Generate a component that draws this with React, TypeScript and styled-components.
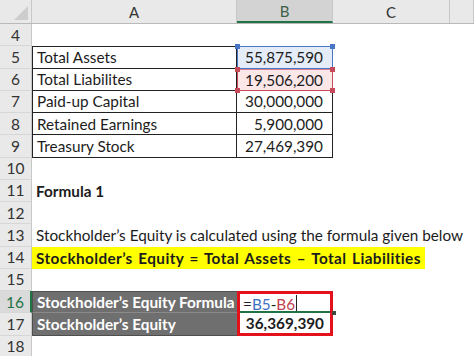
import React from 'react';
import styled, { createGlobalStyle, css } from 'styled-components';

const GlobalStyle = createGlobalStyle`
  html, body {
    margin: 0;
    padding: 0;
    background: #ffffff;
  }
  body {
    font-family: Lato, "Open Sans", "Liberation Sans", sans-serif;
    color: #1c1c1c;
  }
  * { box-sizing: border-box; }
`;

const COLS = '32px 205px 96px 117px 1fr';
const ROW_H = '22.25px';

const Sheet = styled.div({
    width: '474px',
    height: '356px',
    overflow: 'hidden',
    background: '#fff',
})

const HeaderRow = styled.div({
    display: 'grid',
    gridTemplateColumns: COLS,
    height: '24px',
    background: '#e9e9e9',
    borderBottom: '1px solid #b9b9b9',
})

const Corner = styled.div({
    position: 'relative',
    borderRight: '1px solid #c8c8c8',
    '&::after': {
        content: '""',
        position: 'absolute',
        right: '3px',
        bottom: '3px',
        width: 0,
        height: 0,
        borderLeft: '14px solid transparent',
        borderBottom: '14px solid #cdcdcd',
    },
})

const ColHead = styled.div<{ $active?: boolean }>`
  display: flex;
  align-items: center;
  justify-content: center;
  font-size: 15px;
  color: #333;
  border-right: 1px solid #c8c8c8;
  ${p => p.$active && css`
    background: #d3d3d3;
    color: #3b5f47;
    border-bottom: 2px solid #217346;
  `}
`;

const Row = styled.div({
    display: 'grid',
    gridTemplateColumns: COLS,
    height: ROW_H,
})

const RowNum = styled.div<{ $active?: boolean }>`
  display: flex;
  align-items: center;
  justify-content: center;
  font-size: 15.5px;
  color: #333;
  background: #e9e9e9;
  border-bottom: 1px solid #d6d6d6;
  border-right: 1px solid #c8c8c8;
  ${p => p.$active && css`
    background: #dadada;
    color: #217346;
    border-right: 2px solid #217346;
  `}
`;

const Cell = styled.div<{ $span?: number; $bold?: boolean; $right?: boolean }>`
  display: flex;
  align-items: center;
  padding: 0 4px;
  font-size: 15.3px;
  white-space: nowrap;
  grid-column: span ${p => p.$span || 1};
  font-weight: ${p => (p.$bold ? 700 : 400)};
  justify-content: ${p => (p.$right ? 'flex-end' : 'flex-start')};
  ${p => p.$right && css`padding-right: 9px;`}
`;

const TableCell = styled(Cell)<{ $first?: boolean; $label?: boolean }>`
  border-right: 1px solid #222;
  border-bottom: 1px solid #222;
  ${p => p.$first && css`border-top: 1px solid #222;`}
  ${p => p.$label && css`border-left: 1px solid #222;`}
`;

const RefCell = styled(Cell)<{ $tone: 'blue' | 'red' }>`
  position: relative;
  background: ${p => (p.$tone === 'blue' ? '#e4ecf8' : '#fbe6e8')};
  border: 1px solid ${p => (p.$tone === 'blue' ? '#4a76c6' : '#c64a5a')};
  ${p => p.$tone === 'red' && css`border-top-color: #d9838e;`}
`;

const Handle = styled.span<{ $tone: 'blue' | 'red'; $pos: 'tl' | 'tr' | 'bl' | 'br' }>`
  position: absolute;
  width: 5px;
  height: 5px;
  background: ${p => (p.$tone === 'blue' ? '#4a76c6' : '#c64a5a')};
  ${p => (p.$pos[0] === 't' ? 'top: -3px;' : 'bottom: -3px;')}
  ${p => (p.$pos[1] === 'l' ? 'left: -3px;' : 'right: -3px;')}
`;

const Highlight = styled(Cell)({
    justifySelf: 'start',
    background: '#ffff00',
    fontWeight: 700,
    wordSpacing: '1.5px',
    letterSpacing: '0.4px',
    paddingRight: '4px',
})

const DarkCell = styled(Cell)<{ $top?: boolean }>`
  background: #6f6f6f;
  color: #fff;
  font-weight: 700;
  border-left: 1px solid #4f4f4f;
  border-bottom: 1px solid ${p => (p.$top ? '#8a8a8a' : '#4f4f4f')};
  ${p => p.$top && css`border-top: 1px solid #4f4f4f;`}
`;

const FormulaCell = styled(Cell)`
  position: relative;
  padding-left: 3px;
  border: 3px solid #e3111b;
  border-bottom: none;
  &::after {
    content: '';
    position: absolute;
    left: 0;
    right: 0;
    bottom: 0;
    height: 2px;
    background: #217346;
  }
`;

const ResultCell = styled(Cell)`
  border: 3px solid #e3111b;
  border-top: none;
  font-weight: 700;
  padding-right: 6px;
`;

const FillHandle = styled.span({
    position: 'absolute',
    right: '-6px',
    bottom: '-2px',
    width: '4px',
    height: '4px',
    background: '#3d4a3f',
})

const Ref = styled.span<{ $tone?: 'blue' | 'red' }>`
  color: ${p => (p.$tone === 'blue' ? '#3e6fc2' : p.$tone === 'red' ? '#c2404f' : '#1c1c1c')};
`;

const Caret = styled.span({
    display: 'inline-block',
    width: '1px',
    height: '17px',
    marginLeft: '1px',
    background: '#222',
})

const table = [
    { row: 5, label: 'Total Assets', value: '55,875,590', tone: 'blue' as const },
    { row: 6, label: 'Total Liabilites', value: '19,506,200', tone: 'red' as const },
    { row: 7, label: 'Paid-up Capital', value: '30,000,000' },
    { row: 8, label: 'Retained Earnings', value: '5,900,000' },
    { row: 9, label: 'Treasury Stock', value: '27,469,390' },
];

export default function App() {
    return (
        <Sheet>
            <GlobalStyle />
            <HeaderRow>
                <Corner />
                <ColHead>A</ColHead>
                <ColHead $active>B</ColHead>
                <ColHead>C</ColHead>
                <ColHead />
            </HeaderRow>

            <Row>
                <RowNum>4</RowNum>
            </Row>

            {table.map((r, i) => (
                <Row key={r.row}>
                    <RowNum>{r.row}</RowNum>
                    <TableCell $label $first={i === 0}>{r.label}</TableCell>
                    {r.tone ? (
                        <RefCell $tone={r.tone} $right>
                            {r.value}
                            <Handle $tone={r.tone} $pos='tl' />
                            <Handle $tone={r.tone} $pos='tr' />
                            {r.tone === 'red' && <Handle $tone='red' $pos='bl' />}
                            {r.tone === 'red' && <Handle $tone='red' $pos='br' />}
                        </RefCell>
                    ) : (
                        <TableCell $right>{r.value}</TableCell>
                    )}
                </Row>
            ))}

            <Row><RowNum>10</RowNum></Row>
            <Row>
                <RowNum>11</RowNum>
                <Cell $bold $span={3}>Formula 1</Cell>
            </Row>
            <Row><RowNum>12</RowNum></Row>
            <Row>
                <RowNum>13</RowNum>
                <Cell $span={4}>Stockholder’s Equity is calculated using the formula given below</Cell>
            </Row>
            <Row>
                <RowNum>14</RowNum>
                <Highlight $span={3}>Stockholder’s Equity = Total Assets – Total Liabilities</Highlight>
            </Row>
            <Row><RowNum>15</RowNum></Row>
            <Row>
                <RowNum $active>16</RowNum>
                <DarkCell $top>Stockholder’s Equity Formula</DarkCell>
                <FormulaCell>
                    <Ref>=</Ref><Ref $tone='blue'>B5</Ref><Ref>-</Ref><Ref $tone='red'>B6</Ref>
                    <Caret />
                    <FillHandle />
                </FormulaCell>
            </Row>
            <Row>
                <RowNum>17</RowNum>
                <DarkCell>Stockholder’s Equity</DarkCell>
                <ResultCell $right>36,369,390</ResultCell>
            </Row>
            <Row><RowNum>18</RowNum></Row>
        </Sheet>
    );
}
